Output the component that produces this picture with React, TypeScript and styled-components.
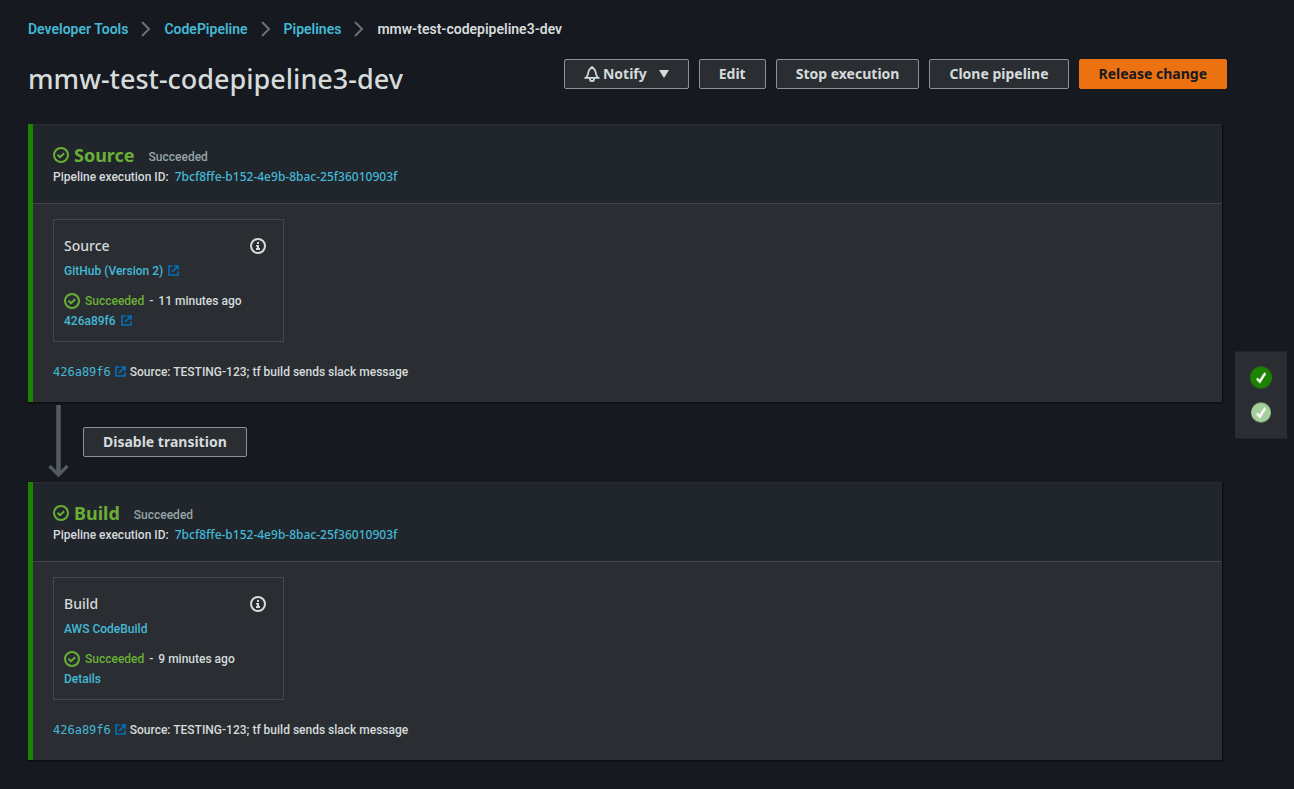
import React from "react";
import styled, { createGlobalStyle } from "styled-components";

const headingFont = '"Noto Sans", "Open Sans", sans-serif';

const GlobalStyle = createGlobalStyle`
  *, *::before, *::after { box-sizing: border-box; }
  body {
    margin: 0;
    background: #16191f;
    color: #d5dbdb;
    font-family: Roboto, "Noto Sans", sans-serif;
    font-size: 12px;
    font-weight: 500;
    line-height: 20px;
  }
`;

const Page = styled.div`
  padding: 19px 0 28px;
`;

const Breadcrumbs = styled.ol`
  display: flex;
  align-items: center;
  margin: 0;
  padding: 0 28px;
  list-style: none;
  font-size: 14px;
  font-weight: 600;
`;

const Crumb = styled.li`
  display: flex;
  align-items: center;
`;

const Link = styled.a`
  color: #44b9d6;
  text-decoration: none;
  &:hover { text-decoration: underline; }
`;

const CrumbDivider = styled.svg`
  width: 10px;
  height: 16px;
  margin: 0 13px;
  fill: none;
  stroke: #687078;
  stroke-width: 2;
`;

const TitleBar = styled.header`
  display: flex;
  justify-content: space-between;
  align-items: flex-start;
  gap: 20px;
  padding: 20px 67px 25px 28px;
`;

const Title = styled.h1`
  margin: 0;
  font-family: ${headingFont};
  font-size: 27px;
  font-weight: 500;
  line-height: 40px;
`;

const Actions = styled.div`
  display: flex;
  gap: 10px;
`;

const Button = styled.button<{ $primary?: boolean }>`
  display: inline-flex;
  align-items: center;
  justify-content: center;
  height: 30px;
  padding: 0 19px;
  border: 1px solid ${(p) => (p.$primary ? "#ec7211" : "#879596")};
  border-radius: 2px;
  background: ${(p) => (p.$primary ? "#ec7211" : "#2a2e33")};
  color: ${(p) => (p.$primary ? "#16191f" : "#d5dbdb")};
  font-family: ${headingFont};
  font-size: 14px;
  font-weight: 700;
  line-height: 20px;
  white-space: nowrap;
  cursor: pointer;
`;

const BellIcon = styled.svg`
  width: 16px;
  height: 16px;
  margin-right: 3px;
  fill: none;
  stroke: currentColor;
  stroke-width: 1.7;
  stroke-linejoin: round;
`;

const Caret = styled.svg`
  width: 10px;
  height: 8px;
  margin-left: 12px;
  fill: currentColor;
`;

const Stages = styled.main`
  padding: 0 72px 0 28px;
`;

const StagePanel = styled.section`
  border-left: 5px solid #1d8102;
  background: #2a2e33;
  box-shadow: 0 1px 1px 0 #0b0d10, 1px 1px 1px 0 #0b0d10;
`;

const StageHeader = styled.header`
  padding: 19px 20px 16px;
  border-top: 1px solid #2a2e33;
  border-bottom: 1px solid #414750;
  background: #21252c;
`;

const StageHeading = styled.div`
  display: flex;
  align-items: center;
  height: 22px;
  margin-bottom: 1px;
`;

const StageName = styled.h2`
  margin: 0 14px 0 5px;
  color: #6aaf35;
  font-family: ${headingFont};
  font-size: 18px;
  font-weight: 700;
  line-height: 22px;
`;

const StageStatus = styled.span`
  padding-top: 4px;
  color: #95a5a6;
`;

const Execution = styled.div`
  display: flex;
  gap: 6px;
`;

const ExecutionLink = styled(Link)`
  font-family: ${headingFont};
`;

const StageBody = styled.div`
  padding: 15px 20px 20px;
`;

const ActionCard = styled.article`
  width: 231px;
  padding: 16px 10px 10px;
  border: 1px solid #414750;
`;

const CardTop = styled.div`
  display: flex;
  align-items: center;
  justify-content: space-between;
  height: 20px;
  margin-bottom: 5px;
  padding-right: 7px;
`;

const CardTitle = styled.h3`
  margin: 0;
  font-family: ${headingFont};
  font-size: 14px;
  font-weight: 500;
  line-height: 20px;
`;

const IconButton = styled.button`
  display: flex;
  padding: 0;
  border: 0;
  background: none;
  color: #d5dbdb;
  cursor: pointer;
`;

const Line = styled.div<{ $spaced?: boolean }>`
  display: flex;
  align-items: center;
  height: 20px;
  gap: 5px;
  margin-top: ${(p) => (p.$spaced ? "10px" : "0")};
`;

const Good = styled.span`
  color: #6aaf35;
`;

const Revision = styled.div`
  display: flex;
  align-items: center;
  gap: 4px;
  margin-top: 20px;
`;

const Commit = styled(Link)`
  font-family: "DejaVu Sans Mono", monospace;
`;

const StatusSvg = styled.svg`
  flex: none;
  width: 16px;
  height: 16px;
  fill: none;
  stroke: #6aaf35;
  stroke-width: 2;
`;

const InfoSvg = styled.svg`
  width: 16px;
  height: 16px;
`;

const ExternalSvg = styled.svg`
  flex: none;
  width: 11px;
  height: 11px;
  margin-bottom: 2px;
  fill: none;
  stroke: #0073bb;
  stroke-width: 2;
`;

const Transition = styled.div`
  display: flex;
  align-items: flex-start;
  gap: 14px;
  padding: 3px 20px 4px;
`;

const ArrowSvg = styled.svg`
  width: 21px;
  height: 73px;
  fill: none;
  stroke: #545b64;
`;

const TransitionAction = styled.div`
  padding-top: 22px;
`;

const StageNav = styled.nav`
  position: fixed;
  top: 50%;
  right: 7px;
  transform: translateY(-50%);
  display: flex;
  flex-direction: column;
  align-items: center;
  gap: 13px;
  padding: 15px;
  background: #2a2e33;
`;

const NavDot = styled.a`
  display: block;
  height: 22px;
  svg { display: block; }
`;

function StatusIcon() {
  return (
    <StatusSvg viewBox="0 0 16 16" aria-hidden="true">
      <circle cx="8" cy="8" r="7" />
      <path d="M4.500 7.800l2.500 2.400 4.200-4" />
    </StatusSvg>
  );
}

function InfoIcon() {
  return (
    <InfoSvg viewBox="0 0 16 16" aria-hidden="true">
      <circle cx="8" cy="8" r="7" fill="none" stroke="currentColor" strokeWidth="2" />
      <path d="M7 4h2v2H7zM6 7h3v3h1v2H6v-2h1V8.500H6z" fill="currentColor" />
    </InfoSvg>
  );
}

function ExternalIcon() {
  return (
    <ExternalSvg viewBox="0 0 11 11" aria-hidden="true">
      <path d="M4.500 1H1v9h9V6.500M6 1h4v4M10 1L4 7" strokeWidth="1.600" />
    </ExternalSvg>
  );
}

function DotIcon({ color, radius }: { color: string; radius: number }) {
  return (
    <svg width="22" height="22" viewBox="0 0 22 22" aria-hidden="true">
      <circle cx="11" cy="11" r={radius} fill={color} />
      <path d="M6.800 12l3 3 5.500-8.300" fill="none" stroke="#fff" strokeWidth="2.400" />
    </svg>
  );
}

type Stage = {
  name: string;
  provider: string;
  providerExternal?: boolean;
  age: string;
  detail: string;
  detailExternal?: boolean;
};

const stages: Stage[] = [
  {
    name: "Source",
    provider: "GitHub (Version 2)",
    providerExternal: true,
    age: "11 minutes ago",
    detail: "426a89f6",
    detailExternal: true,
  },
  { name: "Build", provider: "AWS CodeBuild", age: "9 minutes ago", detail: "Details" },
];

function StageView({ stage }: { stage: Stage }) {
  return (
    <StagePanel id={stage.name.toLowerCase()}>
      <StageHeader>
        <StageHeading>
          <StatusIcon />
          <StageName>{stage.name}</StageName>
          <StageStatus>Succeeded</StageStatus>
        </StageHeading>
        <Execution>
          <span>Pipeline execution ID:</span>
          <ExecutionLink href="#execution">7bcf8ffe-b152-4e9b-8bac-25f36010903f</ExecutionLink>
        </Execution>
      </StageHeader>
      <StageBody>
        <ActionCard>
          <CardTop>
            <CardTitle>{stage.name}</CardTitle>
            <IconButton type="button" aria-label={`${stage.name} information`}>
              <InfoIcon />
            </IconButton>
          </CardTop>
          <Line>
            <Link href="#provider">{stage.provider}</Link>
            {stage.providerExternal && <ExternalIcon />}
          </Line>
          <Line $spaced>
            <StatusIcon />
            <Good>Succeeded</Good>
            <span>-</span>
            <span>{stage.age}</span>
          </Line>
          <Line>
            <Link href="#detail">{stage.detail}</Link>
            {stage.detailExternal && <ExternalIcon />}
          </Line>
        </ActionCard>
        <Revision>
          <Commit href="#commit">426a89f6</Commit>
          <ExternalIcon />
          <span>Source: TESTING-123; tf build sends slack message</span>
        </Revision>
      </StageBody>
    </StagePanel>
  );
}

export default function App() {
  return (
    <Page>
      <GlobalStyle />
      <nav aria-label="Breadcrumb">
        <Breadcrumbs>
          {["Developer Tools", "CodePipeline", "Pipelines"].map((name) => (
            <Crumb key={name}>
              <Link href="#crumb">{name}</Link>
              <CrumbDivider viewBox="0 0 10 16" aria-hidden="true">
                <path d="M1 1l7 7-7 7" />
              </CrumbDivider>
            </Crumb>
          ))}
          <Crumb aria-current="page">mmw-test-codepipeline3-dev</Crumb>
        </Breadcrumbs>
      </nav>
      <TitleBar>
        <Title>mmw-test-codepipeline3-dev</Title>
        <Actions>
          <Button type="button">
            <BellIcon viewBox="0 0 16 16" aria-hidden="true">
              <path d="M.5 11.800h15M2.200 11.500C4.400 9.500 3.800 7.500 4.600 5.200 5.200 3.500 6.400 2.400 8 1c1.600 1.400 2.800 2.500 3.400 4.200.8 2.300.2 4.300 2.400 6.300" />
              <path d="M5.800 12.200c0 4 4.400 4 4.400 0" />
            </BellIcon>
            Notify
            <Caret viewBox="0 0 10 8" aria-hidden="true">
              <path d="M0 0h10L5 8z" />
            </Caret>
          </Button>
          <Button type="button">Edit</Button>
          <Button type="button">Stop execution</Button>
          <Button type="button">Clone pipeline</Button>
          <Button type="button" $primary>
            Release change
          </Button>
        </Actions>
      </TitleBar>
      <Stages>
        <StageView stage={stages[0]} />
        <Transition>
          <ArrowSvg viewBox="0 0 21 73" aria-hidden="true">
            <path d="M10.500 0v70" strokeWidth="4.500" />
            <path d="M1.500 61l9 9 9-9" strokeWidth="3.200" />
          </ArrowSvg>
          <TransitionAction>
            <Button type="button">Disable transition</Button>
          </TransitionAction>
        </Transition>
        <StageView stage={stages[1]} />
      </Stages>
      <StageNav aria-label="Stages">
        <NavDot href="#source" aria-label="Source succeeded">
          <DotIcon color="#1d8102" radius={11} />
        </NavDot>
        <NavDot href="#build" aria-label="Build succeeded">
          <DotIcon color="#a5cf9b" radius={10} />
        </NavDot>
      </StageNav>
    </Page>
  );
}
